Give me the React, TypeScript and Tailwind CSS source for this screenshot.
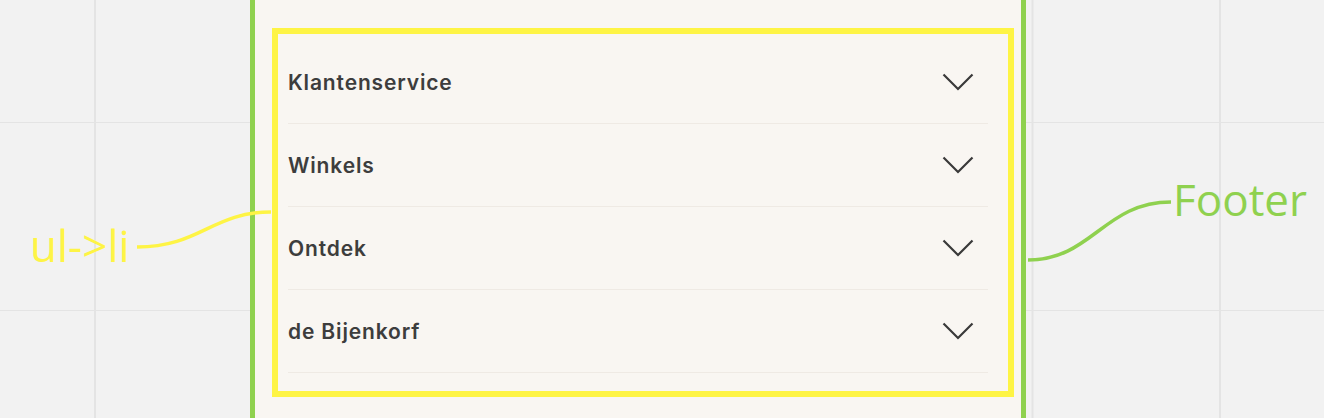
const items = ['Klantenservice', 'Winkels', 'Ontdek', 'de Bijenkorf'];

const Chevron = () => (
  <svg width="32" height="18" viewBox="0 0 32 18" fill="none" className="shrink-0">
    <polyline points="1.5,1.5 16,16 30.5,1.5" stroke="#3a3a3a" strokeWidth="2.2" />
  </svg>
);

export default function App() {
  return (
    <div className="relative h-[418px] w-[1324px] overflow-hidden bg-[#f2f2f2] bg-[linear-gradient(to_right,#e4e4e4_1.5px,transparent_1.5px),linear-gradient(to_bottom,#e4e4e4_1.5px,transparent_1.5px)] bg-[size:187.5px_188px] bg-[position:94px_121px]">
      <div className="flex h-full">
        <div className="w-[250px] shrink-0" />

        {/* footer panel */}
        <footer className="h-full w-[776px] shrink-0 border-x-[5px] border-x-[#8fd14f] bg-[#f9f6f2] pl-[17px] pr-[7px] pt-[28px]">
          <div className="h-[369px] border-[6px] border-[#fef445]">
            <ul className="pl-[10px] pr-[20px] pt-[7px] font-['Inter',sans-serif]">
              {items.map(item => (
                <li key={item} className="flex h-[83px] items-center justify-between border-b border-[#efeae4] pr-[14px]">
                  <span className="pt-[2px] text-[21px] font-semibold tracking-[0.85px] text-[#3d3d3d]">{item}</span>
                  <Chevron />
                </li>
              ))}
            </ul>
          </div>
        </footer>
      </div>

      {/* annotations */}
      <svg className="pointer-events-none absolute inset-0" width="1324" height="418">
        <path d="M137 247 C 200 247, 212 212, 271 212" stroke="#fef445" strokeWidth="3.5" fill="none" />
        <path d="M1028 260 C 1092 260, 1104 202, 1171 202" stroke="#8fd14f" strokeWidth="3.5" fill="none" />
      </svg>
      <div className="absolute left-[30px] top-[223px] font-['Open_Sans',sans-serif] text-[44px] leading-none text-[#fef445]">
        ul-&gt;li
      </div>
      <div className="absolute left-[1173px] top-[177px] font-['Open_Sans',sans-serif] text-[44px] leading-none text-[#8fd14f]">
        Footer
      </div>
    </div>
  );
}
